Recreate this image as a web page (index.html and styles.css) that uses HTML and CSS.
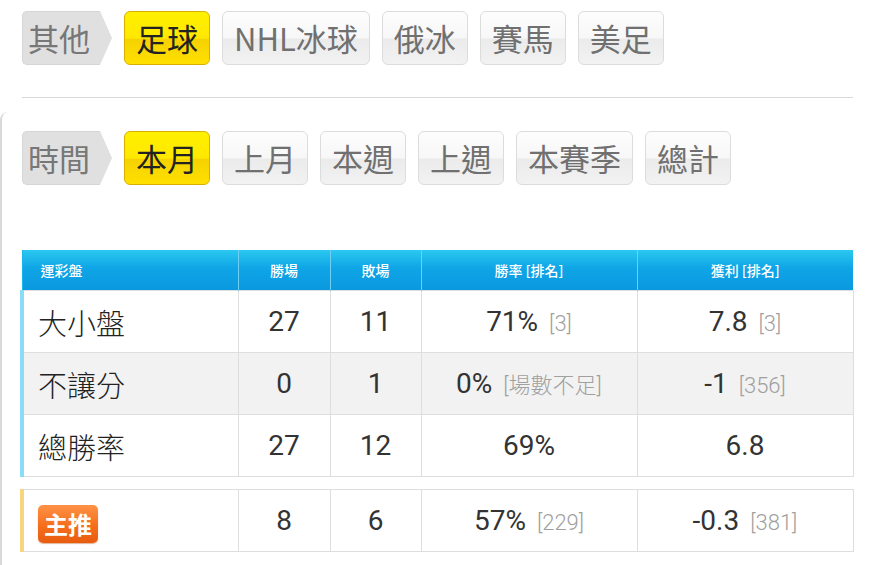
FILE: index.html
```html
<!DOCTYPE html>
<html>
<head>
<meta charset="utf-8">
<link rel="stylesheet" href="styles.css">
</head>
<body>
<div class="top">
  <div class="tabs">
    <div class="label">其他</div>
    <div class="tab on">足球</div>
    <div class="tab">NHL冰球</div>
    <div class="tab">俄冰</div>
    <div class="tab">賽馬</div>
    <div class="tab">美足</div>
  </div>
  <div class="divider"></div>
</div>
<div class="section">
  <div class="tabs">
    <div class="label">時間</div>
    <div class="tab on">本月</div>
    <div class="tab">上月</div>
    <div class="tab">本週</div>
    <div class="tab">上週</div>
    <div class="tab">本賽季</div>
    <div class="tab">總計</div>
  </div>
  <table class="stats">
    <colgroup><col class="c1"><col class="c2"><col class="c3"><col class="c4"><col class="c5"></colgroup>
    <thead>
      <tr><th class="name">運彩盤</th><th>勝場</th><th>敗場</th><th>勝率 [排名]</th><th>獲利 [排名]</th></tr>
    </thead>
    <tbody>
      <tr><td class="name">大小盤</td><td>27</td><td>11</td><td>71%<span class="rk">[3]</span></td><td>7.8<span class="rk">[3]</span></td></tr>
      <tr class="alt"><td class="name">不讓分</td><td>0</td><td>1</td><td>0%<span class="rk">[場數不足]</span></td><td>-1<span class="rk">[356]</span></td></tr>
      <tr><td class="name">總勝率</td><td>27</td><td>12</td><td>69%</td><td>6.8</td></tr>
    </tbody>
  </table>
  <table class="stats main">
    <colgroup><col class="c1"><col class="c2"><col class="c3"><col class="c4"><col class="c5"></colgroup>
    <tbody>
      <tr><td class="name"><span class="badge">主推</span></td><td>8</td><td>6</td><td>57%<span class="rk">[229]</span></td><td>-0.3<span class="rk">[381]</span></td></tr>
    </tbody>
  </table>
</div>
</body>
</html>
```
FILE: styles.css
```css
html, body {
  margin: 0;
  padding: 0;
  background: #fff;
  font-family: "Noto Sans CJK TC", "Noto Sans", sans-serif;
}
.top {
  padding: 11px 20px 0 22px;
}
.tabs {
  display: flex;
  gap: 12px;
  height: 54px;
}
.label {
  position: relative;
  height: 54px;
  line-height: 52px;
  box-sizing: border-box;
  padding: 0 0 0 5px;
  width: 78px;
  background: #e0e0e0;
  border: 1px solid #d6d6d6;
  border-right: none;
  border-radius: 5px 0 0 5px;
  color: #777;
  font-size: 31px;
  margin-right: 12px;
}
.label::after {
  content: "";
  position: absolute;
  right: -12px;
  top: -1px;
  border-left: 12px solid #e0e0e0;
  border-top: 27px solid transparent;
  border-bottom: 27px solid transparent;
}
.tab {
  height: 54px;
  line-height: 52px;
  box-sizing: border-box;
  padding: 0 11px;
  border: 1px solid #dcdcdc;
  border-radius: 6px;
  background: linear-gradient(#fdfdfd 0%, #f7f7f7 50%, #ebebeb 52%, #f2f2f2 100%);
  color: #707070;
  font-size: 31px;
}
.tab.on {
  background: linear-gradient(#fff000 0%, #ffe800 50%, #f5d200 53%, #ffe000 100%);
  border-color: #d8b000;
  color: #222;
}
.divider {
  height: 1px;
  background: #d9d9d9;
  margin-top: 32px;
  width: 831px;
}
.section {
  margin-top: 14px;
  border-left: 2px solid #dadada;
  border-top-left-radius: 8px;
  padding: 19px 0 0 20px;
  height: 440px;
}
.stats {
  border-collapse: collapse;
  table-layout: fixed;
  width: 831px;
  margin-top: 65px;
  margin-left: -2px;
  font-family: Roboto, "Noto Sans CJK TC", sans-serif;
}
.stats.main {
  margin-top: 12px;
}
.c1 { width: 216px; }
.c2 { width: 92px; }
.c3 { width: 91px; }
.c4 { width: 216px; }
.c5 { width: 216px; }
.stats th {
  height: 40px;
  padding: 0;
  background: linear-gradient(#2ac8f0, #0fa5e6 45%, #0a98df);
  color: #fff;
  font-size: 14px;
  font-weight: 500;
  border-left: 1px solid #6fd0f3;
  font-family: "Noto Sans CJK TC", sans-serif;
}
.stats th.name {
  text-align: left;
  padding-left: 18px;
  border-left: 1px solid #19b6ec;
}
.stats td {
  height: 61px;
  padding: 0;
  border: 1px solid #dedede;
  text-align: center;
  font-size: 28px;
  color: #333;
}
.stats tr.alt td {
  background: #f2f2f2;
}
.stats td.name {
  text-align: left;
  padding-left: 14px;
  font-family: "Noto Sans CJK TC", sans-serif;
  font-size: 29px;
  font-weight: 300;
  color: #222;
  border-left: 4px solid #8ddcf7;
}
.stats.main td.name {
  border-left-color: #f8d47e;
}
.rk {
  font-size: 22px;
  color: #a0a0a0;
  margin-left: 11px;
  font-weight: 300;
}
.badge {
  display: inline-block;
  vertical-align: middle;
  height: 38px;
  line-height: 37px;
  padding: 0 6px;
  border-radius: 5px;
  background: linear-gradient(#ff9246, #f56e1c 55%, #e85c10);
  color: #fff;
  font-weight: bold;
  font-size: 24px;
  box-shadow: 0 1px 1px rgba(180, 70, 0, 0.4);
}
```
